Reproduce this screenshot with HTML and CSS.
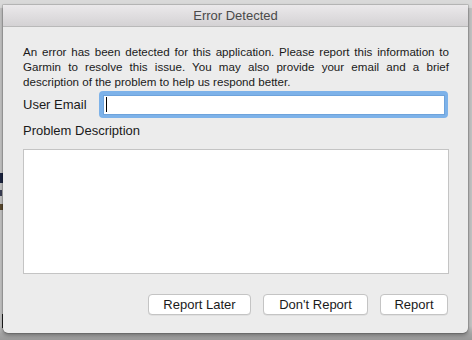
FILE: index.html
```html
<!DOCTYPE html>
<html>
<head>
<meta charset="utf-8">
<link rel="stylesheet" href="styles.css">
</head>
<body>
<div class="desktop">
  <div class="behind">
    <div class="frag f1"></div>
    <div class="frag f2"></div>
    <div class="frag f3"></div>
    <div class="frag f4"></div>
  </div>
  <div class="sheet">
    <div class="titlebar">Error Detected</div>
    <div class="content">
      <p class="message">An error has been detected for this application. Please report this information to Garmin to resolve this issue. You may also provide your email and a brief description of the problem to help us respond better.</p>
      <div class="email-row">
        <label class="label">User Email</label>
        <div class="input-focus"><div class="input"><span class="caret"></span></div></div>
      </div>
      <div class="label desc-label">Problem Description</div>
      <div class="textarea"></div>
      <div class="buttons">
        <button class="btn btn-later">Report Later</button>
        <button class="btn btn-dont">Don't Report</button>
        <button class="btn btn-report">Report</button>
      </div>
    </div>
  </div>
</div>
</body>
</html>
```
FILE: styles.css
```css
html, body {
  margin: 0;
  padding: 0;
}
body {
  width: 472px;
  height: 340px;
  overflow: hidden;
  background: #9d9d9d;
  font-family: "Liberation Sans", Arial, sans-serif;
}
.desktop {
  position: relative;
  width: 472px;
  height: 340px;
  background: linear-gradient(#d9d9d9 0, #d9d9d9 8px, #c4c4c4 8px, #c4c4c4 326px, #a4a4a4 334px, #9a9a9a 340px);
  padding: 5px 4px 0 3px;
  box-sizing: border-box;
}
.behind {
  position: absolute;
  left: 0;
  top: 0;
  width: 4px;
  height: 340px;
  overflow: hidden;
}
.frag {
  position: absolute;
  left: 0;
  background: #1c2540;
}
.f1 { top: 173px; width: 3px; height: 10px; }
.f2 { top: 190px; width: 2px; height: 6px; background: #3a3f55; }
.f3 { top: 204px; width: 3px; height: 6px; background: #5a4a30; }
.f4 { top: 314px; left: 2px; width: 1px; height: 14px; background: #222; }
.sheet {
  position: relative;
  width: 465px;
  height: 328px;
  background: #ececec;
  border-radius: 0 0 5px 5px;
  box-shadow: 0 2px 4px rgba(0,0,0,0.35), 0 0 0 0.5px rgba(0,0,0,0.25);
  overflow: hidden;
}
.titlebar {
  height: 21px;
  line-height: 22px;
  text-align: center;
  font-size: 13px;
  color: #4a4a4a;
  background: linear-gradient(#ebe9eb, #d4d2d4);
  border-bottom: 1px solid #b9b9b9;
  border-radius: 4px 4px 0 0;
}
.content {
  padding: 0 19px 0 20px;
}
.message {
  margin: 17px 0 0 0;
  font-size: 11.6px;
  line-height: 15px;
  text-align: justify;
  color: #1a1a1a;
}
.email-row {
  display: flex;
  align-items: center;
  margin-top: 1px;
  height: 28px;
}
.label {
  font-size: 13px;
  color: #1a1a1a;
}
.email-row .label {
  width: 76px;
}
.input-focus {
  flex: 1;
  height: 27px;
  box-sizing: border-box;
  border-radius: 4px;
  background: #7db2e9;
  padding: 4px 3px 3px 4px;
  margin-right: 1px;
}
.input {
  height: 20px;
  background: #fff;
  border: 1px solid #6ea3db;
  box-sizing: border-box;
  display: flex;
  align-items: center;
  padding-left: 2px;
}
.caret {
  width: 1px;
  height: 15px;
  background: #000;
}
.desc-label {
  margin-top: 5px;
  line-height: 16px;
}
.textarea {
  margin-top: 10px;
  height: 123px;
  background: #fff;
  border: 1px solid #c4c4c4;
}
.buttons {
  display: flex;
  justify-content: flex-end;
  gap: 12px;
  margin-top: 20px;
  padding-right: 1px;
}
.btn {
  height: 21px;
  background: #fff;
  border: 1px solid #c4c4c4;
  border-radius: 4px;
  font-family: "Liberation Sans", Arial, sans-serif;
  font-size: 13px;
  color: #1a1a1a;
  padding: 0;
  box-shadow: 0 0.5px 0 rgba(0,0,0,0.1);
}
.btn-later { width: 103px; }
.btn-dont { width: 105px; }
.btn-report { width: 68px; }
```
